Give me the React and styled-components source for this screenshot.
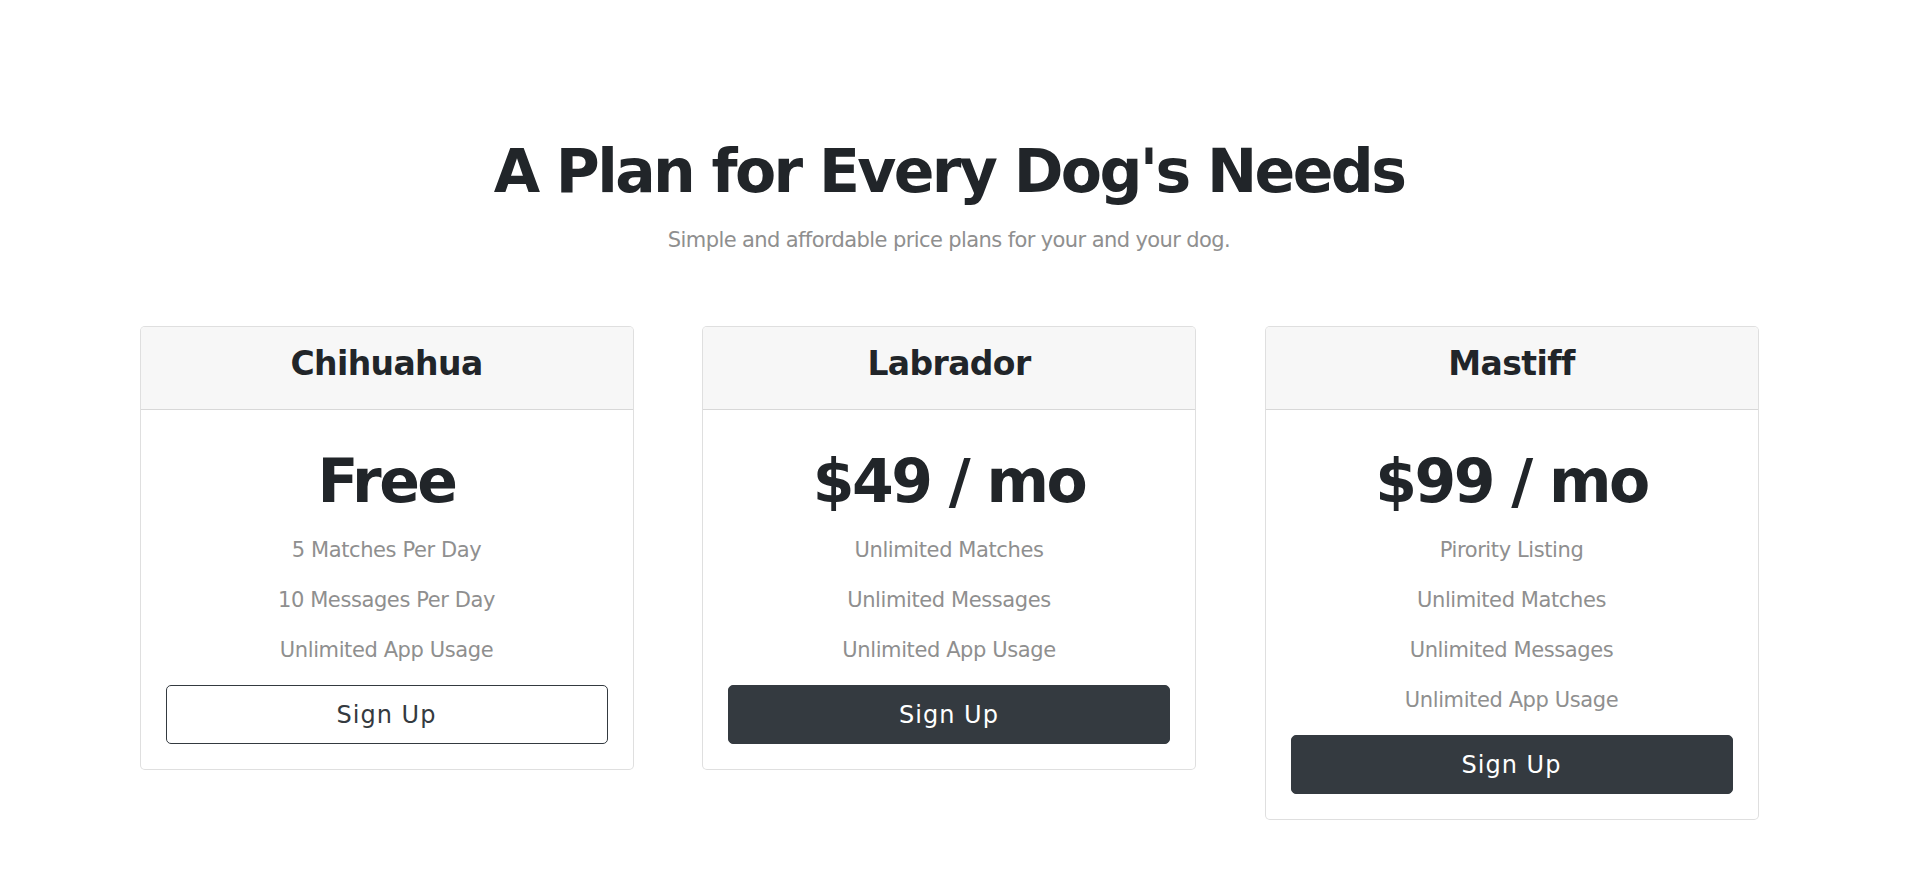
import React from "react";
import styled, { createGlobalStyle } from "styled-components";

const GlobalStyle = createGlobalStyle`
body {
    margin: 0;
    background-color: #ffffff;
    color: #212529;
    font-family: 'DejaVu Sans', 'Liberation Sans', Arial, sans-serif;
}
* {
    box-sizing: border-box;
}
`

const Section = styled.section`
padding: 135px 22px 40px 0;
text-align: center;
`

const Titulo = styled.h2`
margin: 0;
font-size: 60px;
line-height: 72px;
font-weight: 700;
letter-spacing: -2.6px;
color: #212529;
`

const Subtitulo = styled.p`
margin: 18px 0 0;
font-size: 21px;
line-height: 30px;
letter-spacing: -0.6px;
color: #8f8f8f;
`

const Grade = styled.div`
margin-top: 71px;
display: grid;
grid-template-columns: repeat(3, 494px);
column-gap: 68.5px;
justify-content: center;
align-items: start;
`

const Card = styled.div`
border: 1px solid rgba(0, 0, 0, 0.125);
border-radius: 5px;
overflow: hidden;
background-color: #ffffff;
`

const CardHeader = styled.div`
height: 83px;
padding-top: 17px;
background-color: #f7f7f7;
border-bottom: 1px solid rgba(0, 0, 0, 0.125);
`

const Nome = styled.h3`
margin: 0;
font-size: 33px;
line-height: 40px;
font-weight: 700;
letter-spacing: -0.6px;
color: #212529;
`

const CardBody = styled.div`
padding: 35px 25px 25px;
`

const Preco = styled.h2`
margin: 0 0 18px;
font-size: 60px;
line-height: 72px;
font-weight: 700;
letter-spacing: -2.5px;
color: #212529;
`

const Item = styled.p`
margin: 0 0 20px;
font-size: 21px;
line-height: 30px;
letter-spacing: -0.4px;
color: #8f8f8f;
`

const Button = styled.button`
width: 100%;
height: 59px;
display: flex;
align-items: center;
justify-content: center;
border-radius: 5px;
border: 1px solid #343a40;
background-color: ${(props) => (props.$outline ? '#ffffff' : '#343a40')};
color: ${(props) => (props.$outline ? '#343a40' : '#ffffff')};
font-family: 'DejaVu Sans', 'Liberation Sans', Arial, sans-serif;
font-size: 24px;
letter-spacing: 1px;
cursor: pointer;
`

const planos = [
    {
        nome: 'Chihuahua',
        preco: 'Free',
        itens: ['5 Matches Per Day', '10 Messages Per Day', 'Unlimited App Usage'],
        outline: true
    },
    {
        nome: 'Labrador',
        preco: '$49 / mo',
        itens: ['Unlimited Matches', 'Unlimited Messages', 'Unlimited App Usage'],
        outline: false
    },
    {
        nome: 'Mastiff',
        preco: '$99 / mo',
        itens: ['Pirority Listing', 'Unlimited Matches', 'Unlimited Messages', 'Unlimited App Usage'],
        outline: false
    }
]

const App = () => {
    return (
        <>
            <GlobalStyle />
            <Section>
                <Titulo>A Plan for Every Dog's Needs</Titulo>
                <Subtitulo>Simple and affordable price plans for your and your dog.</Subtitulo>
                <Grade>
                    {planos.map((plano) => (
                        <Card key={plano.nome}>
                            <CardHeader>
                                <Nome>{plano.nome}</Nome>
                            </CardHeader>
                            <CardBody>
                                <Preco>{plano.preco}</Preco>
                                {plano.itens.map((item) => (
                                    <Item key={item}>{item}</Item>
                                ))}
                                <Button $outline={plano.outline}>Sign Up</Button>
                            </CardBody>
                        </Card>
                    ))}
                </Grade>
            </Section>
        </>
    )
}

export default App;
